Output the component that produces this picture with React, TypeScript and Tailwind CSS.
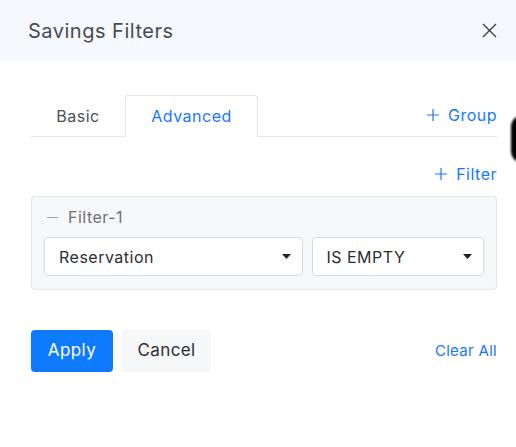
import { JSX } from 'react'

function Caret(): JSX.Element {
  return (
    <svg width="9" height="5" viewBox="0 0 9 5" className="shrink-0">
      <path d="M0 0h9L4.5 5z" fill="#1f2329" />
    </svg>
  )
}

function Plus(): JSX.Element {
  return (
    <svg width="12" height="12" viewBox="0 0 12 12" className="shrink-0">
      <path d="M6 0v12M0 6h12" stroke="currentColor" strokeWidth="1.2" />
    </svg>
  )
}

export default function App(): JSX.Element {
  return (
    <div
      className="relative w-[516px] h-[447px] bg-white overflow-hidden"
      style={{ fontFamily: 'Inter, "Open Sans", sans-serif' }}
    >
      <div className="h-[61px] bg-[#f5f9fe] flex items-center justify-between pl-[28px] pr-[19px]">
        <h1 className="text-[20px] text-[#464b53] tracking-[0.5px]">Savings Filters</h1>
        <svg width="15" height="15" viewBox="0 0 15 15">
          <path d="M1 1l13 13M14 1L1 14" stroke="#3c4149" strokeWidth="1.4" />
        </svg>
      </div>

      <div className="px-[31px] pr-[19px]">
        <div className="mt-[34px] flex items-end border-b border-[#e3e5e9] h-[42px]">
          <div className="w-[94px] h-full flex items-center justify-center text-[16px] tracking-[0.5px] text-[#4a4f57]">
            Basic
          </div>
          <div className="w-[133px] h-[42px] -mb-px flex items-center justify-center text-[16px] tracking-[0.5px] text-[#1677ff] bg-white border border-[#e3e5e9] border-b-white rounded-t-[4px]">
            Advanced
          </div>
          <div className="ml-auto h-full flex items-center gap-[9px] pb-[2px] text-[16px] tracking-[0.5px] text-[#1677ff]">
            <Plus />
            Group
          </div>
        </div>

        <div className="flex justify-end items-center gap-[9px] mt-[27px] text-[16px] tracking-[0.5px] text-[#1677ff] h-[20px]">
          <Plus />
          Filter
        </div>

        <div className="mt-[12px] bg-[#f7f8fa] border border-[#e2e4e8] rounded-[4px] px-[12px] pt-[8px] pb-[13px]">
          <div className="flex items-center gap-[10px] h-[24px] text-[16px] tracking-[0.5px] text-[#6b7078]">
            <span className="w-[11px] h-px bg-[#9ea3aa] ml-[3px]" />
            Filter-1
          </div>
          <div className="flex gap-[9px] mt-[8px]">
            <div className="w-[260px] h-[39px] bg-white border border-[#d9dce1] rounded-[4px] flex items-center justify-between pl-[14px] pr-[11px] text-[16px] tracking-[0.5px] text-[#2a2e34]">
              Reservation
              <Caret />
            </div>
            <div className="w-[172px] h-[39px] bg-white border border-[#d9dce1] rounded-[4px] flex items-center justify-between pl-[13px] pr-[11px] text-[16px] tracking-[0.5px] text-[#2a2e34]">
              IS EMPTY
              <Caret />
            </div>
          </div>
        </div>

        <div className="mt-[40px] flex items-center">
          <button className="w-[82px] h-[42px] rounded-[4px] bg-[#0d7aff] text-white text-[17px] tracking-[0.4px]">
            Apply
          </button>
          <button className="ml-[9px] w-[89px] h-[42px] rounded-[4px] bg-[#f6f7f9] text-[#2a2e34] text-[17px] tracking-[0.4px]">
            Cancel
          </button>
          <span className="ml-auto text-[15px] tracking-[0.3px] text-[#1677ff]">Clear All</span>
        </div>
      </div>

      <div className="absolute left-[511px] top-[115px] w-[30px] h-[48px] rounded-[12px] bg-black blur-[1px]" />
    </div>
  )
}
